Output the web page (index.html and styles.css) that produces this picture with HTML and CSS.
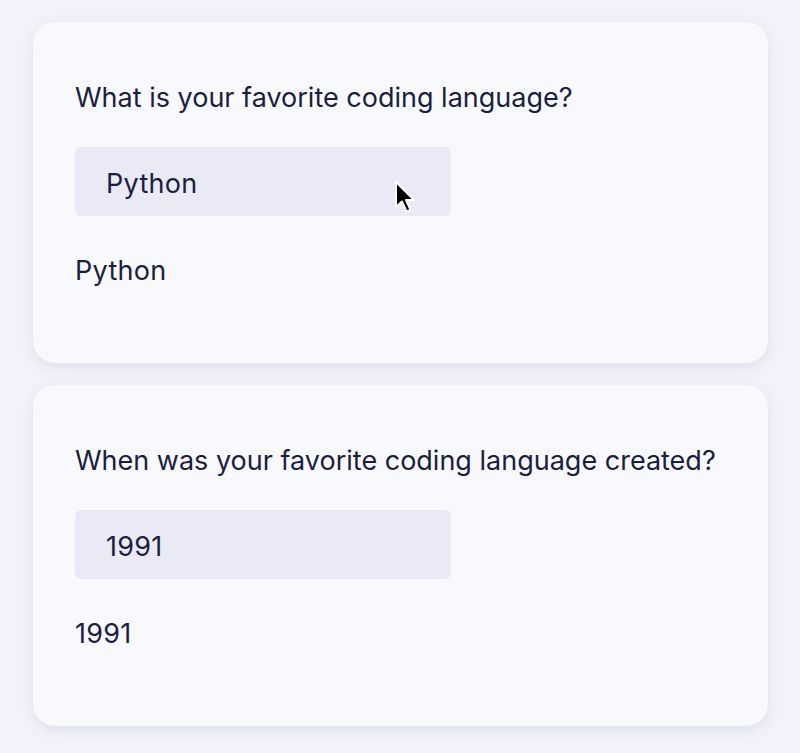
FILE: index.html
```html
<!DOCTYPE html>
<html>
<head>
<meta charset="utf-8">
<link rel="stylesheet" href="styles.css">
</head>
<body>
<main class="page">
  <section class="card">
    <p class="question">What is your favorite coding language?</p>
    <div class="field">
      <span class="field-value">Python</span>
      <svg class="cursor" width="24" height="36" viewBox="0 0 24 36"><path d="M2 2 L2 27 L8 21.5 L12.5 31.5 L16.5 29.8 L12 20 L20 20 Z" fill="#000" stroke="#fff" stroke-width="2" stroke-linejoin="round"/></svg>
    </div>
    <p class="answer">Python</p>
  </section>
  <section class="card">
    <p class="question">When was your favorite coding language created?</p>
    <div class="field">
      <span class="field-value">1991</span>
    </div>
    <p class="answer">1991</p>
  </section>
</main>
</body>
</html>
```
FILE: styles.css
```css
html, body {
  margin: 0;
  padding: 0;
}
body {
  background: #f2f3fa;
  font-family: Inter, "Noto Sans", sans-serif;
  color: #1b1e42;
}
.page {
  display: flex;
  flex-direction: column;
  gap: 22px;
  padding: 22px 32px 27px 33px;
}
.card {
  background: #f8f9fc;
  border-radius: 22px;
  box-shadow: 0 4px 14px rgba(40, 45, 90, 0.10);
  height: 341px;
  box-sizing: border-box;
  padding: 58px 42px 0 42px;
}
.question {
  margin: 0;
  font-size: 27px;
  line-height: 36px;
}
.field {
  position: relative;
  margin-top: 31px;
  width: 376px;
  height: 69px;
  background: #e9eaf5;
  border-radius: 6px;
  display: flex;
  align-items: center;
  padding: 3px 0 0 31px;
  box-sizing: border-box;
}
.field-value {
  font-size: 27px;
  letter-spacing: 0.3px;
}
.cursor {
  position: absolute;
  left: 319px;
  top: 33px;
}
.answer {
  margin: 37px 0 0 0;
  font-size: 27px;
  line-height: 36px;
  letter-spacing: 0.3px;
}
```
